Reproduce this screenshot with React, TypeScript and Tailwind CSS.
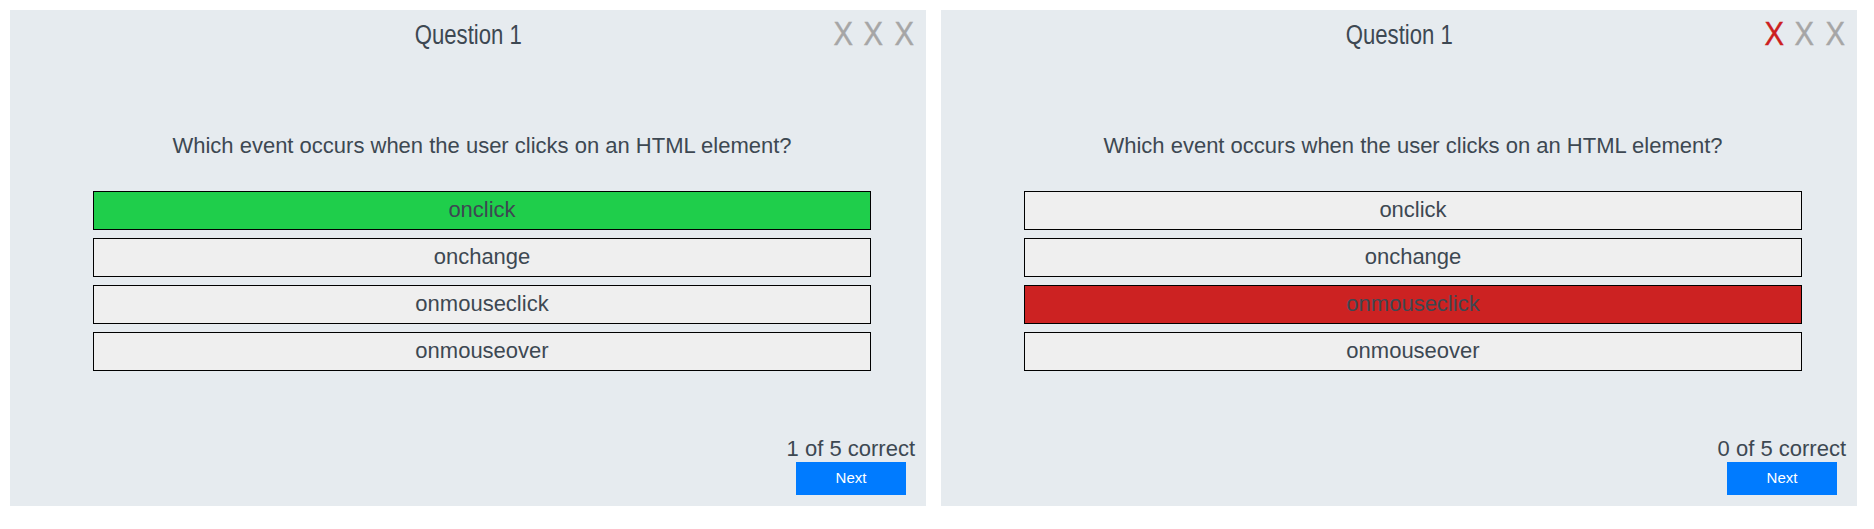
import React from "react";

// One quiz card: question, four answers, score and the Next button
interface QuizPanelProps {
  marks: ("red" | "gray")[];
  picked: number;
  pickedColor: "green" | "red";
  score: string;
}

const answers = ["onclick", "onchange", "onmouseclick", "onmouseover"];

function QuizPanel({ marks, picked, pickedColor, score }: QuizPanelProps) {
  return (
    <div className="relative w-[916px] h-[496px] shrink-0 bg-[#e6ebef] flex flex-col">
      {/* Title (narrow face, squeezed since no narrow font is installed) */}
      <div className="mt-[10px] flex justify-center text-[27px] leading-[31px] text-[#3d4852] [font-family:'Liberation_Sans',Arial,sans-serif]">
        <span className="inline-block scale-x-[0.82] origin-center">Question 1</span>
      </div>

      {/* Strike marks */}
      <div className="absolute top-[6px] right-[12px] flex gap-[10.5px] text-[34px] leading-none [font-family:'Liberation_Sans',Arial,sans-serif]">
        {marks.map((m, i) => (
          <span
            key={i}
            className={`w-[20px] flex justify-center ${m === "red" ? "text-[#cc2020]" : "text-[#a6a6a6]"}`}
          >
            <span className="inline-block scale-x-[0.86] origin-center [-webkit-text-stroke:0.4px_currentColor]">X</span>
          </span>
        ))}
      </div>

      {/* Question */}
      <div className="mt-[82px] pl-[28px] text-center text-[22px] leading-[25px] text-[#3d4852] [font-family:'Liberation_Sans',Arial,sans-serif]">
        Which event occurs when the user clicks on an HTML element?
      </div>

      {/* Answers */}
      <div className="mt-[33px] ml-[83px] w-[778px] flex flex-col gap-[8px]">
        {answers.map((a, i) => (
          <div
            key={a}
            className={`h-[39px] border border-black flex items-center justify-center text-[22px] leading-[25px] pb-[3px] text-[#3d4852] [font-family:'Liberation_Sans',Arial,sans-serif] ${
              i === picked
                ? pickedColor === "green"
                  ? "bg-[#1fce4b]"
                  : "bg-[#cc2222]"
                : "bg-[#efefef]"
            }`}
          >
            {a}
          </div>
        ))}
      </div>

      {/* Score + Next */}
      <div className="mt-auto pb-[11px] flex flex-col items-end [font-family:'Liberation_Sans',Arial,sans-serif]">
        <div className="pr-[11px] text-[22px] leading-[25px] mb-[1px] text-[#3d4852]">{score}</div>
        <button className="mr-[20px] w-[110px] h-[33px] bg-[#007bff] text-white text-[15px]">
          Next
        </button>
      </div>
    </div>
  );
}

export default function App() {
  return (
    <div className="min-h-[529px] bg-white p-[10px] flex gap-[15px]">
      <QuizPanel marks={["gray", "gray", "gray"]} picked={0} pickedColor="green" score="1 of 5 correct" />
      <QuizPanel marks={["red", "gray", "gray"]} picked={2} pickedColor="red" score="0 of 5 correct" />
    </div>
  );
}
